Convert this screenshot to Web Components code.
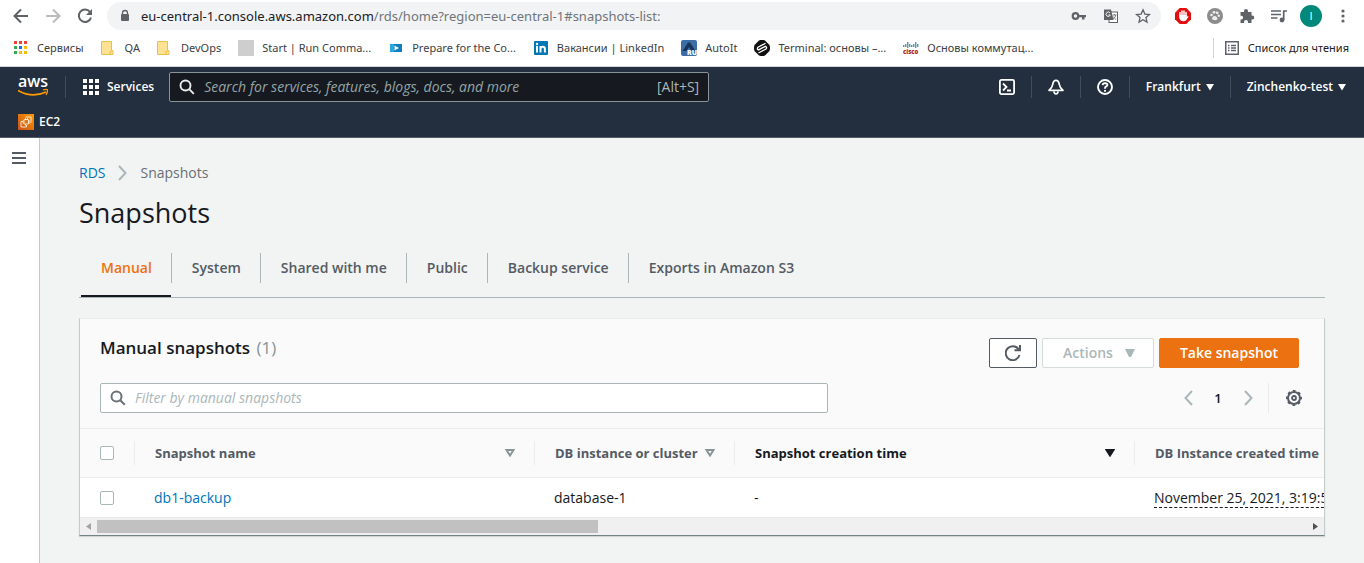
<!DOCTYPE html>
<html lang="en">
<head>
<meta charset="utf-8">
<title>Snapshots - RDS</title>
<style>
html, body { margin: 0; min-height: 100%; background: #f2f3f3; }
body { font-family: "Open Sans", "Noto Sans", sans-serif; font-size: 14px; line-height: 20px; color: #16191f; }
</style>
</head>
<body>
<console-window></console-window>

<script>
const define = (name, html) => customElements.define(name, class extends HTMLElement {
  constructor() {
    super();
    const t = document.createElement('template');
    t.innerHTML = html;
    this.attachShadow({ mode: 'open' }).append(t.content.cloneNode(true));
  }
});
const reset = `
  *, *::before { box-sizing: border-box; }
  svg { display: block; flex: none; }
  button { font: inherit; color: inherit; background: none; border: 0; margin: 0; padding: 0; display: flex; align-items: center; justify-content: center; white-space: nowrap; cursor: pointer; }
  a { color: inherit; text-decoration: none; }
`;

define('tool-button', `<style>${reset}
  :host { display: block; flex: none; color: #5f6368; }
  button { width: 32px; height: 28px; }
</style><button type="button" part="button"><slot></slot></button>`);

define('browser-toolbar', `<style>${reset}
  :host { display: flex; align-items: center; height: 34px; padding: 0 5px 2px; background: #fff; }
  .address { flex: 1; min-width: 0; display: flex; align-items: center; height: 28px; margin: 0 6px; padding: 0 2px 0 12px; border-radius: 14px; background: #f1f3f4; }
  .url { flex: 1; min-width: 0; margin-left: 10px; font-family: "Noto Sans", sans-serif; font-size: 13px; color: #70757a; white-space: nowrap; overflow: hidden; }
  .url b { font-weight: 400; color: #202124; }
  .avatar { width: 22px; height: 22px; border-radius: 50%; background: #00897b; color: #fff; font-size: 11px; line-height: 22px; text-align: center; }
</style>
<tool-button aria-label="Back"><svg width="16" height="16" viewBox="0 0 16 16" fill="none" stroke="#5f6368" stroke-width="2"><path d="M15 8H2.500M8 1.500L1.500 8L8 14.500"/></svg></tool-button>
<tool-button aria-label="Forward"><svg width="16" height="16" viewBox="0 0 16 16" fill="none" stroke="#babcbe" stroke-width="2"><path d="M1 8H13.500M8 1.500L14.500 8L8 14.500"/></svg></tool-button>
<tool-button aria-label="Reload"><svg width="16" height="16" viewBox="0 0 16 16"><path d="M13 4A6.200 6.200 0 1 0 14 9.500" fill="none" stroke="#5f6368" stroke-width="2"/><path d="M15 1V7H9Z" fill="#5f6368"/></svg></tool-button>
<div class="address">
  <svg width="12" height="14" viewBox="0 0 12 14"><rect x="2" y="5" width="8" height="7" rx="1" fill="#5f6368"/><path d="M3.500 5.500V4a2.500 2.500 0 0 1 5 0V5.500" fill="none" stroke="#5f6368" stroke-width="1.300"/></svg>
  <div class="url"><b>eu-central-1.console.aws.amazon.com</b>/rds/home?region=eu-central-1#snapshots-list:</div>
  <tool-button aria-label="Passwords"><svg width="16" height="16" viewBox="0 0 16 16"><circle cx="4.500" cy="8" r="2.800" fill="none" stroke="#5f6368" stroke-width="2.200"/><path d="M7 7H15V9.300H13.500V11.500H11V9.300H7Z" fill="#5f6368"/></svg></tool-button>
  <tool-button aria-label="Translate"><svg width="16" height="16" viewBox="0 0 16 16"><rect x="6" y="4" width="8.500" height="10.500" fill="#fff" stroke="#5f6368"/><path d="M1 1.500H8L10.500 12H1Z" fill="#5f6368"/><path d="M7 4.900A2.200 2.200 0 1 0 7.300 7H5.300" fill="none" stroke="#f1f3f4"/><path d="M9.500 7H13.500M11.500 6V7M10 11C12 10 12.500 8.500 12.600 7M10.300 8.500C11 10 12 11 13.200 11.500" fill="none" stroke="#5f6368" stroke-width=".8"/></svg></tool-button>
  <tool-button aria-label="Bookmark"><svg width="16" height="16" viewBox="0 0 16 16"><path d="M8 1.800L9.900 6.100L14.500 6.500L11 9.600L12 14.100L8 11.700L4 14.100L5 9.600L1.500 6.500L6.100 6.100Z" fill="none" stroke="#5f6368" stroke-width="1.300"/></svg></tool-button>
</div>
<tool-button aria-label="Ad blocker"><svg width="16" height="16" viewBox="0 0 16 16"><path d="M4.700 0H11.300L16 4.700V11.300L11.300 16H4.700L0 11.300V4.700Z" fill="#e40d0d"/><path d="M5 8V4.500M7 7V3M9 7V3M11 8V4.500" stroke="#fff" stroke-width="1.500" stroke-linecap="round"/><path d="M4.300 7H11.700V9L13 7.800L13.500 8.800L11 12.500Q8 14 5.500 12.200L4.300 10Z" fill="#fff"/></svg></tool-button>
<tool-button aria-label="Extension"><svg width="16" height="16" viewBox="0 0 16 16"><circle cx="8" cy="8" r="8" fill="#8c8c8c"/><g fill="#eee"><circle cx="4.500" cy="7" r="1.300"/><circle cx="7" cy="4.300" r="1.400"/><circle cx="10.200" cy="4.800" r="1.400"/><circle cx="11.800" cy="7.700" r="1.200"/><path d="M5 10.500Q5.300 7.500 8.300 8Q10.500 9 10.500 11Q9.700 12.500 8 12Q5.500 12.500 5 10.500Z"/></g></svg></tool-button>
<tool-button aria-label="Extensions"><svg width="16" height="16" viewBox="0 0 16 16"><path d="M1.500 4H5V3a2 2 0 0 1 4 0V4H12.500V7.500H13.300a2 2 0 0 1 0 4H12.500V15H9V14a2 2 0 0 0-4 0V15H1.500V11.500H2.200a1.900 1.900 0 0 0 0-3.800H1.500Z" fill="#5f6368"/></svg></tool-button>
<tool-button aria-label="Media"><svg width="16" height="16" viewBox="0 0 16 16"><path d="M0 3H10M0 6.500H10M0 10H6.500" stroke="#5f6368" stroke-width="1.700"/><path d="M12.700 12V3H16" fill="none" stroke="#5f6368" stroke-width="1.700"/><circle cx="11" cy="12" r="2.400" fill="#5f6368"/></svg></tool-button>
<tool-button aria-label="Profile"><div class="avatar">I</div></tool-button>
<tool-button aria-label="Menu"><svg width="16" height="16" viewBox="0 0 16 16" fill="#5f6368"><circle cx="8" cy="3" r="1.600"/><circle cx="8" cy="8" r="1.600"/><circle cx="8" cy="13" r="1.600"/></svg></tool-button>`);

define('bookmark-link', `<style>${reset}
  :host { display: block; flex: none; }
  a { display: flex; align-items: center; gap: 8px; }
</style><a href="#"><slot name="icon"></slot><span><slot></slot></span></a>`);

const folder = `<svg slot="icon" width="16" height="16" viewBox="0 0 16 16"><path d="M.500 1.500H10.500V10.500H12V14.500H.500Z" fill="#fde293" stroke="#e8c04e"/><path d="M9 14.500V11.500H10.500" fill="none" stroke="#e8c04e"/></svg>`;
define('bookmarks-bar', `<style>${reset}
  :host { display: flex; align-items: center; gap: 17px; height: 33px; padding: 0 15px 4px 13px; background: #fff; border-bottom: 1px solid #d5d7da; font: 11px/20px "Noto Sans", "Open Sans", sans-serif; color: #3c4043; white-space: nowrap; }
  .reading { margin-left: auto; padding-left: 10px; border-left: 1px solid #d0d2d5; color: #202124; }
</style>
<bookmark-link><svg slot="icon" width="16" height="16" viewBox="0 0 16 16"><path d="M1 1h3v3H1zM6 1h3v3H6zM11 1h3v3H11z" fill="#ea4335"/><path d="M1 6h3v3H1zM1 11h3v3H1z" fill="#34a853"/><path d="M6 6h3v3H6z" fill="#1a73e8"/><path d="M11 6h3v3H11zM6 11h3v3H6zM11 11h3v3H11z" fill="#fbbc04"/></svg>Сервисы</bookmark-link>
<bookmark-link>${folder}QA</bookmark-link>
<bookmark-link>${folder}DevOps</bookmark-link>
<bookmark-link><svg slot="icon" width="16" height="16"><rect width="16" height="16" fill="#cecece"/></svg>Start | Run Comma...</bookmark-link>
<bookmark-link><svg slot="icon" width="16" height="16" viewBox="0 0 16 16"><rect x="2" y="4" width="12" height="8" fill="#0d7fc0"/><rect x="2" y="4" width="4" height="8" fill="#25a8e0"/><path d="M6.500 5.500L11 8L6.500 10.500Z" fill="#fff"/></svg>Prepare for the Co...</bookmark-link>
<bookmark-link><svg slot="icon" width="16" height="16" viewBox="0 0 16 16"><rect x="1" y="1" width="14" height="14" rx="1" fill="#0077b5"/><path d="M4 6V12.500M7.500 6V12.500M7.500 9a2.200 2.200 0 0 1 4.400 0V12.500" fill="none" stroke="#fff" stroke-width="2"/><circle cx="4" cy="4" r="1.200" fill="#fff"/></svg>Вакансии | LinkedIn</bookmark-link>
<bookmark-link><svg slot="icon" width="16" height="16" viewBox="0 0 16 16"><rect width="16" height="16" rx="2" fill="#3d6da6"/><path d="M7 2.500H9L14.500 11H10.500L8 7L5.500 11H1.500Z" fill="#173456"/><text x="6" y="15" font-family="Open Sans" font-size="7" font-weight="800" fill="#fff">RU</text></svg>AutoIt</bookmark-link>
<bookmark-link><svg slot="icon" width="16" height="16" viewBox="0 0 16 16"><path d="M5 .5Q8-1 11 .5L15.500 5Q16.500 8 15.500 11L11 15.500Q8 16.500 5 15.500L.5 11Q-.5 8 .5 5Z" fill="#111"/><path d="M11.500 3.300L4 7.300Q2.500 9 4.500 10L11.500 6.300Q13.500 7.500 12 9L4.500 13M4 10L11.500 6.300" fill="none" stroke="#fff" stroke-width="1.300"/></svg>Terminal: основы –...</bookmark-link>
<bookmark-link><svg slot="icon" width="16" height="16" viewBox="0 0 16 16"><path d="M.8 5V7M2.800 4V7M4.800 2V8M6.800 4V7M8.800 5V7M10.800 4V7M12.800 2V8M14.800 4V7" stroke="#1d6c8c"/><text x="0" y="14" font-family="Open Sans" font-size="6" font-weight="800" fill="#b01f24">cisco</text></svg>Основы коммутац...</bookmark-link>
<bookmark-link class="reading"><svg slot="icon" width="16" height="16" viewBox="0 0 16 16"><rect x="1.750" y="1.750" width="12.500" height="12.500" fill="none" stroke="#5f6368" stroke-width="1.500"/><path d="M4 5.500H5.500M4 8H5.500M4 10.500H5.500M7 5.500H12M7 8H12M7 10.500H12" stroke="#5f6368" stroke-width="1.300"/></svg>Список для чтения</bookmark-link>`);

define('aws-header', `<style>${reset}
  :host { display: block; background: #232f3e; color: #fff; border-bottom: 1px solid #545b64; font-size: 12px; font-weight: 600; }
  .top { display: flex; align-items: center; height: 40px; padding: 0 18px; }
  .sep { flex: none; width: 1px; height: 22px; background: #414d5c; margin: 0 17px; }
  .right .sep { margin: 0 16px; }
  .services { gap: 8px; margin-right: 15px; }
  .search { flex: 0 1 540px; min-width: 0; display: flex; align-items: center; height: 30px; padding: 0 9px; border: 1px solid #879596; border-radius: 2px; background: #16191f; color: #aab7b8; font-size: 14px; font-weight: 400; }
  .search input { flex: 1; min-width: 0; margin: 0 0 0 9px; padding: 0; border: 0; outline: 0; background: none; color: #fff; font: 14px/20px "Open Sans", sans-serif; }
  .search input::placeholder { color: #95a5a6; font-style: italic; opacity: 1; }
  .right { margin-left: auto; display: flex; align-items: center; }
  .menu { gap: 5px; }
  .fav { display: flex; align-items: center; height: 30px; padding: 0 18px; }
  .fav a { display: flex; align-items: center; gap: 5px; }
</style>
<div class="top">
  <a href="#" aria-label="AWS home"><svg width="30" height="24" viewBox="0 0 30 24"><text x="0" y="12" font-family="Open Sans" font-size="16" font-weight="600" fill="#fff">aws</text><path d="M0 15.500Q14 23.500 28 17" fill="none" stroke="#f90" stroke-width="1.800"/><path d="M25 15Q28.500 13.800 29.500 14.700Q29.800 17 28 19.800" fill="none" stroke="#f90" stroke-width="1.300"/></svg></a>
  <span class="sep"></span>
  <button class="services" type="button"><svg width="16" height="16" viewBox="0 0 16 16" fill="#fff"><path d="M0 0h4v4H0zM6 0h4v4H6zM12 0h4v4h-4zM0 6h4v4H0zM6 6h4v4H6zM12 6h4v4h-4zM0 12h4v4H0zM6 12h4v4H6zM12 12h4v4h-4z"/></svg>Services</button>
  <label class="search">
    <svg width="16" height="16" viewBox="0 0 16 16" fill="none" stroke="#eaeded" stroke-width="1.900"><circle cx="6.500" cy="6.500" r="5"/><path d="M10.200 10.200L14.800 14.800"/></svg>
    <input type="search" aria-label="Search" placeholder="Search for services, features, blogs, docs, and more"><span>[Alt+S]</span>
  </label>
  <div class="right">
    <button type="button" aria-label="CloudShell"><svg width="16" height="16" viewBox="0 0 16 16" fill="none" stroke="#fff" stroke-width="1.800"><rect x=".9" y=".9" width="14.200" height="14.200" rx="1.500"/><path d="M4 4.500L7.500 8L4 11.500M8 11.500H12"/></svg></button>
    <span class="sep"></span>
    <button type="button" aria-label="Notifications"><svg width="16" height="16" viewBox="0 0 16 16" fill="none" stroke="#fff" stroke-width="1.700" stroke-linejoin="round"><path d="M8 1.300C5.800 1.300 5 3.500 4.700 5.500C4.400 8 3 9.500 1 11.300H15C13 9.500 11.600 8 11.300 5.500C11 3.500 10.200 1.300 8 1.300ZM6 12.500Q6.300 15 8 15Q9.700 15 10 12.500"/></svg></button>
    <span class="sep"></span>
    <button type="button" aria-label="Help"><svg width="16" height="16" viewBox="0 0 16 16" fill="none" stroke="#fff" stroke-width="1.900"><circle cx="8" cy="8" r="7"/><path d="M5.600 6.200Q5.800 4.100 8 4.100Q10.400 4.200 10.400 6Q10.300 7.200 8.900 7.700Q8 8.200 8 9.700M8 11V12.700"/></svg></button>
    <span class="sep"></span>
    <button class="menu" type="button">Frankfurt<svg width="8" height="8" viewBox="0 0 8 8"><path d="M0 1H8L4 7.500Z" fill="#fff"/></svg></button>
    <span class="sep"></span>
    <button class="menu" type="button">Zinchenko-test<svg width="8" height="8" viewBox="0 0 8 8"><path d="M0 1H8L4 7.500Z" fill="#fff"/></svg></button>
  </div>
</div>
<div class="fav"><a href="#"><svg width="16" height="16" viewBox="0 0 16 16"><defs><linearGradient id="g" x1="0" y1="1" x2="1" y2="0"><stop stop-color="#c8511b"/><stop offset="1" stop-color="#f90"/></linearGradient></defs><rect width="16" height="16" fill="url(#g)"/><g fill="none" stroke="#fff" stroke-width=".8"><rect x="6" y="5.500" width="4.500" height="4.500" rx=".5"/><path d="M7.500 4V5.500M9.500 4V5.500M7.500 10V11.500M4.500 7H6M4.500 9H6M10.500 7H12M10.500 9H12M7.500 3H13V8.500H12.500M5 7.500H3V13H8.500V11"/></g></svg>EC2</a></div>`);

define('side-rail', `<style>${reset}
  :host { display: block; flex: none; width: 40px; background: #fff; border-right: 1px solid #c5cacb; }
  button { width: 38px; height: 40px; }
</style><button type="button" aria-label="Open navigation"><svg width="14" height="12" viewBox="0 0 14 12" fill="#545b64"><path d="M0 0h14v2H0zM0 5h14v2H0zM0 10h14v2H0z"/></svg></button>`);

define('bread-crumbs', `<style>${reset}
  :host { display: flex; align-items: center; gap: 13px; height: 20px; color: #687078; }
  a { color: #0073bb; }
</style><a href="#">RDS</a><svg width="9" height="16" viewBox="0 0 9 16" fill="none" stroke="#aab7b8" stroke-width="2"><path d="M1 1L7.500 8L1 15"/></svg><span>Snapshots</span>`);

define('tab-link', `<style>${reset}
  :host { display: flex; height: 44px; font-weight: 600; color: #545b64; }
  a { position: relative; display: flex; align-items: center; height: 30px; padding: 0 19px 0 20px; border-left: 1px solid #aab7b8; white-space: nowrap; }
  :host([selected]) { color: #ec7211; }
  :host([selected]) a { border-left-color: transparent; }
  :host([selected]) a::before { content: ""; position: absolute; left: 0; right: 0; top: 42px; height: 2px; background: #16191f; }
</style><a href="#"><slot></slot></a>`);

define('tab-strip', `<style>:host { display: flex; padding-left: 1px; border-bottom: 1px solid #aab7b8; }</style><slot></slot>`);

define('aws-button', `<style>${reset}
  :host { display: block; flex: none; }
  button { min-width: 48px; height: 30px; padding: 0 20px; border: 1px solid #545b64; border-radius: 2px; background: #fff; font-weight: 600; gap: 12px; color: #545b64; }
  :host([kind=icon]) button { padding: 0; }
  :host([kind=muted]) button { border-color: #d5dbdb; color: #aab7b8; padding: 0 18px 0 20px; }
  :host([kind=primary]) button { border-color: #ec7211; background: #ec7211; color: #fff; }
</style><button type="button"><slot></slot></button>`);

define('column-head', `<style>${reset}
  :host { display: flex; align-items: center; justify-content: space-between; height: 24px; padding: 0 19px 0 20px; border-left: 1px solid #eaeded; font-size: 13px; font-weight: 700; color: #545b64; white-space: nowrap; }
  :host([sorted]) { color: #16191f; }
  path { fill: none; stroke: #879596; stroke-width: 2; }
  :host([sorted]) path { fill: #16191f; stroke: #16191f; }
  :host([plain]) button { display: none; }
</style><span><slot></slot></span><button type="button" aria-label="Sort"><svg width="10" height="8" viewBox="0 0 10 8"><path d="M1.500 1H8.500L5 6.500Z"/></svg></button>`);

define('scroll-bar', `<style>${reset}
  :host { display: flex; align-items: center; height: 18px; background: #f0f0f0; border-top: 1px solid #eaeded; }
  button { flex: none; width: 17px; height: 17px; }
  .track { flex: 1; height: 13px; }
  .thumb { width: 41.4%; height: 100%; background: #c1c1c1; }
</style><button type="button" aria-label="Scroll left"><svg width="5" height="7" viewBox="0 0 5 7"><path d="M5 0V7L0 3.500Z" fill="#a3a3a3"/></svg></button><div class="track"><div class="thumb"></div></div><button type="button" aria-label="Scroll right"><svg width="5" height="7" viewBox="0 0 5 7"><path d="M0 0V7L5 3.500Z" fill="#505050"/></svg></button>`);

define('snapshot-table', `<style>${reset}
  :host { display: block; overflow: hidden; background: #fff; border-top: 1px solid #eaeded; }
  table { width: 1454px; table-layout: fixed; border-collapse: separate; border-spacing: 0; }
  th, td { padding: 0; text-align: left; white-space: nowrap; vertical-align: middle; }
  th { height: 49px; background: #fafafa; border-bottom: 1px solid #eaeded; font-weight: 700; }
  td { height: 39px; padding-left: 20px; }
  td.pick, th.pick { padding-left: 20px; }
  .pick input { display: block; appearance: none; width: 14px; height: 14px; margin: 0; border: 1px solid #aab7b8; border-radius: 2px; background: #fff; }
  .c1 { width: 54px; } .c2, .c4, .c5 { width: 400px; } .c3 { width: 200px; }
  a { color: #0073bb; }
  .date { border-bottom: 1px dashed #16191f; }
</style>
<table>
  <colgroup><col class="c1"><col class="c2"><col class="c3"><col class="c4"><col class="c5"></colgroup>
  <thead><tr>
    <th class="pick"><input type="checkbox" aria-label="Select all snapshots"></th>
    <th><column-head>Snapshot name</column-head></th>
    <th><column-head>DB instance or cluster</column-head></th>
    <th><column-head sorted>Snapshot creation time</column-head></th>
    <th><column-head plain>DB Instance created time</column-head></th>
  </tr></thead>
  <tbody><tr>
    <td class="pick"><input type="checkbox" aria-label="Select db1-backup"></td>
    <td><a href="#">db1-backup</a></td>
    <td>database-1</td>
    <td>-</td>
    <td><span class="date">November 25, 2021, 3:19:5</span></td>
  </tr></tbody>
</table>`);

define('snapshot-panel', `<style>${reset}
  :host { display: block; background: #fafafa; border: 1px solid #c5cccc; border-top-color: #eaeded; border-bottom-color: #748384; box-shadow: 0 1px 1px #d0d4d4; }
  .title, .tools { display: flex; align-items: center; padding: 0 25px 0 20px; }
  .title { padding-top: 19px; gap: 5px; }
  h2 { flex: 1; margin: 0; height: 30px; font-size: 17px; line-height: 20px; font-weight: 600; }
  h2 span { margin-left: 2px; font-weight: 400; color: #879596; }
  .tools { height: 30px; margin: 15px 0; }
  .filter { flex: 0 1 728px; min-width: 0; display: flex; align-items: center; height: 30px; padding: 0 9px; border: 1px solid #aab7b8; border-radius: 2px; background: #fff; }
  .filter input { flex: 1; min-width: 0; margin: 0 0 0 9px; padding: 0; border: 0; outline: 0; background: none; font: 14px/20px "Open Sans", sans-serif; }
  .filter input::placeholder { color: #aab7b8; font-style: italic; opacity: 1; }
  nav { margin: 0 -5px 0 auto; display: flex; align-items: center; font-size: 13px; font-weight: 600; }
  nav button { width: 30px; height: 30px; }
  .gear { margin-left: 5px; padding-left: 15px; width: 36px; border-left: 1px solid #eaeded; }
</style>
<div class="title">
  <h2>Manual snapshots <span>(1)</span></h2>
  <aws-button kind="icon"><svg width="16" height="16" viewBox="0 0 16 16" fill="none" stroke="#545b64" stroke-width="2"><path d="M14.500 10A7 7 0 1 1 13.500 4.200M15 0V5.200H9.500"/></svg></aws-button>
  <aws-button kind="muted">Actions<svg width="10" height="8" viewBox="0 0 10 8"><path d="M0 0H10L6 8H4Z" fill="#aab7b8"/></svg></aws-button>
  <aws-button kind="primary">Take snapshot</aws-button>
</div>
<div class="tools">
  <label class="filter"><svg width="16" height="16" viewBox="0 0 16 16" fill="none" stroke="#687078" stroke-width="2"><circle cx="6.500" cy="6.500" r="5"/><path d="M10.200 10.200L14.800 14.800"/></svg><input type="text" aria-label="Filter by manual snapshots" placeholder="Filter by manual snapshots"></label>
  <nav aria-label="Pages">
    <button type="button" aria-label="Previous page"><svg width="9" height="16" viewBox="0 0 9 16" fill="none" stroke="#aab7b8" stroke-width="2"><path d="M8 1L1.500 8L8 15"/></svg></button>
    <button type="button">1</button>
    <button type="button" aria-label="Next page"><svg width="9" height="16" viewBox="0 0 9 16" fill="none" stroke="#aab7b8" stroke-width="2"><path d="M1 1L7.500 8L1 15"/></svg></button>
    <button class="gear" type="button" aria-label="Preferences"><svg width="16" height="16" viewBox="0 0 16 16" fill="none" stroke="#545b64"><circle cx="8" cy="8" r="6" stroke-width="2"/><circle cx="8" cy="8" r="7.200" stroke-width="1.600" stroke-dasharray="2.827 2.827" stroke-dashoffset="1.400"/><circle cx="8" cy="8" r="2" stroke-width="1.800"/></svg></button>
  </nav>
</div>
<snapshot-table></snapshot-table>
<scroll-bar></scroll-bar>`);

define('console-window', `<style>${reset}
  :host { display: flex; flex-direction: column; min-height: 100vh; }
  .body { flex: 1; display: flex; }
  main { flex: 1; min-width: 0; padding: 25px 39px 27px; }
  h1 { margin: 14px 0 24px; font-size: 27px; line-height: 32px; font-weight: 400; }
  tab-strip { margin-bottom: 20px; }
</style>
<browser-toolbar></browser-toolbar>
<bookmarks-bar></bookmarks-bar>
<aws-header></aws-header>
<div class="body">
  <side-rail></side-rail>
  <main>
    <bread-crumbs></bread-crumbs>
    <h1>Snapshots</h1>
    <tab-strip>
      <tab-link selected>Manual</tab-link>
      <tab-link>System</tab-link>
      <tab-link>Shared with me</tab-link>
      <tab-link>Public</tab-link>
      <tab-link>Backup service</tab-link>
      <tab-link>Exports in Amazon S3</tab-link>
    </tab-strip>
    <snapshot-panel></snapshot-panel>
  </main>
</div>`);
</script>
</body>
</html>
